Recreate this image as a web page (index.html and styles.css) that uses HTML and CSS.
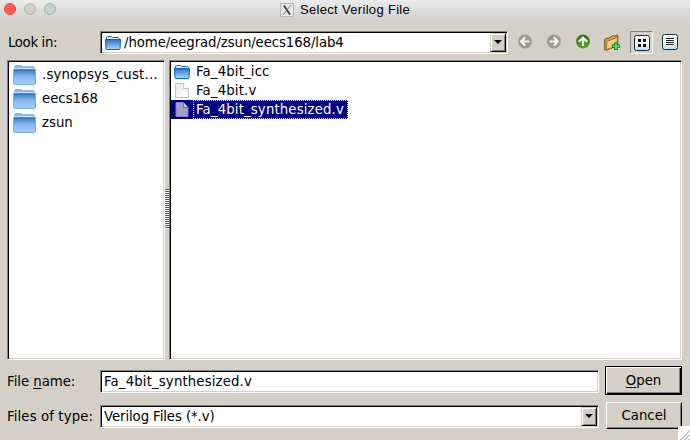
FILE: index.html
```html
<!DOCTYPE html>
<html lang="en">
<head>
<meta charset="utf-8">
<title>Select Verilog File</title>
<link rel="stylesheet" href="styles.css">
</head>
<body>
<svg class="defs" width="0" height="0" aria-hidden="true">
  <defs>
    <linearGradient id="blue" x1="0" y1="0" x2="0" y2="1"><stop offset="0" stop-color="#2d70c4"/><stop offset=".6" stop-color="#79aeea"/><stop offset="1" stop-color="#b5dafd"/></linearGradient>
    <linearGradient id="pale" x1="0" y1="0" x2="0" y2="1"><stop offset="0" stop-color="#3d7bc2"/><stop offset=".5" stop-color="#89b8f2"/><stop offset="1" stop-color="#a5ccfb"/></linearGradient>
    <linearGradient id="tile" x1="0" y1="0" x2="0" y2="1"><stop offset=".5" stop-color="#fff"/><stop offset="1" stop-color="#b5d9fa"/></linearGradient>
    <linearGradient id="green" x1="0" y1="0" x2="0" y2="1"><stop offset="0" stop-color="#2f7714"/><stop offset="1" stop-color="#5aa431"/></linearGradient>
    <linearGradient id="gold" x1="0" y1="0" x2="1" y2="1"><stop offset="0" stop-color="#ffe4a0"/><stop offset="1" stop-color="#e9ad4a"/></linearGradient>
    <linearGradient id="sheet" x1="0" y1="0" x2="1" y2="1"><stop offset="0" stop-color="#e8e8e8"/><stop offset="1" stop-color="#fff"/></linearGradient>
    <symbol id="folder" viewBox="0 0 16 14"><path d="M1.500 3V1.500l1-1h4l1 1h6l1 1V4h-13z" fill="#d9ecff" stroke="#1763b9"/><path d="M.5 3.500h15l-.5 9.500-.5.500h-13L1 13z" fill="url(#blue)" stroke="#0d61bd"/></symbol>
    <symbol id="place" viewBox="0 0 23 20"><path d="M1.500 3V1.500l1-1h6l1 1h11l1 1V4h-20z" fill="#84b6e8" stroke="#8fb8e2"/><path d="M1 3.500h21" stroke="#c9e3ff"/><path d="M.5 4.500h22v14l-1 1h-20l-1-1z" fill="url(#pale)" stroke="#75a8e0"/><path d="M1 5h21" stroke="#2868ae"/></symbol>
    <symbol id="file" viewBox="0 0 14 15"><path d="M.5.5h8l5 5v9H.5z" fill="url(#sheet)" stroke="#c1c1c1"/><path d="M8.500.5v5h5" fill="#fff" stroke="#c1c1c1"/></symbol>
    <symbol id="file-on" viewBox="0 0 14 15"><path d="M1 .5h7.500l4.500 5v9H1z" fill="#a19fc8" stroke="#8583b5"/><path d="M8.500.5v5h4.500" fill="#c2c0df" stroke="#7270aa"/></symbol>
    <symbol id="arrow" viewBox="0 0 14 14"><path d="M7.200 2.800 3.200 7l4 4.200M3.600 7h7.800" fill="none" stroke="#f7f5f1" stroke-width="2.200"/></symbol>
  </defs>
</svg>
<div class="dialog">
  <header class="titlebar">
    <div class="lights"><i class="close"></i><i class="min"></i><i class="max"></i></div>
    <svg class="xlogo" width="14" height="14" viewBox="0 0 14 14"><path d="M.5.5h13v13H.5z" fill="#e7e7e7" stroke="#b4b4b4"/><path d="M3.800 2.500 10 11.500" stroke="#444" stroke-width="2"/><path d="M11 2 3 12" stroke="#666" stroke-width=".8"/></svg>
    <span class="caption">Select Verilog File</span>
  </header>
  <div class="toolbar">
    <label class="look">Look in:</label>
    <div class="field combo path">
      <svg width="16" height="14"><use href="#folder"/></svg>
      <span class="path-text">/home/eegrad/zsun/eecs168/lab4</span>
      <span class="drop"></span>
    </div>
    <div class="tools">
      <svg width="14" height="15" viewBox="0 0 14 14"><circle cx="7" cy="7" r="6.900" fill="#9b9892"/><use href="#arrow" width="14" height="14"/></svg>
      <svg width="14" height="15" viewBox="0 0 14 14"><circle cx="7" cy="7" r="6.900" fill="#9b9892"/><use href="#arrow" width="14" height="14" transform="rotate(180 7 7)"/></svg>
      <svg width="14" height="15" viewBox="0 0 14 14"><circle cx="7" cy="7" r="6.900" fill="url(#green)"/><use href="#arrow" width="14" height="14" transform="rotate(90 7 7)"/></svg>
      <svg class="newdir" width="16" height="17" viewBox="0 0 16 17"><path d="M.6 5.500 3 4l1 .5L9.500 1.500l1 .8L13 .8l.8 1.500v9L3 16H.7z" fill="#d9a04a" stroke="#76521f"/><path d="M3 7.500 14 3 12.500 12 2 16z" fill="url(#gold)" stroke="#8d6124" stroke-width=".8"/><path d="M12 8.500v7.500M8.200 12.200h7.600" stroke="#146d24" stroke-width="3.600"/><path d="M12 9.300v5.900M9 12.200h6" stroke="#4fd768" stroke-width="2"/></svg>
      <span class="pressed"><svg width="16" height="16" viewBox="0 0 16 16"><rect x=".5" y=".5" width="15" height="15" rx="2" fill="url(#tile)" stroke="#182c3e"/><path d="M4 4h3v3H4zM9 4h3v3H9zM4 9h3v3H4zM9 9h3v3H9z" fill="#000"/></svg></span>
      <svg class="detail" width="16" height="16" viewBox="0 0 16 16"><rect x=".5" y=".5" width="15" height="15" rx="2" fill="url(#tile)" stroke="#182c3e"/><path d="M4 4.500h8M4 6.500h8M4 8.500h8M4 10.500h8" stroke="#222"/></svg>
    </div>
  </div>
  <main class="panes">
    <ul class="field places">
      <li><svg width="23" height="20"><use href="#place"/></svg><span class="p1">.synopsys_cust…</span></li>
      <li><svg width="23" height="20"><use href="#place"/></svg><span>eecs168</span></li>
      <li><svg width="23" height="20"><use href="#place"/></svg><span>zsun</span></li>
    </ul>
    <div class="splitter"><i></i></div>
    <ul class="field files">
      <li><svg width="16" height="14"><use href="#folder"/></svg><span>Fa_4bit_icc</span></li>
      <li><svg width="14" height="15"><use href="#file"/></svg><span>Fa_4bit.v</span></li>
      <li class="selected"><svg width="14" height="15"><use href="#file-on"/></svg><span>Fa_4bit_synthesized.v</span></li>
    </ul>
  </main>
  <div class="form">
    <label class="l-name">File <u>n</u>ame:</label>
    <div class="field name"><span>Fa_4bit_synthesized.v</span></div>
    <div class="button default"><span><u>O</u>pen</span></div>
    <label class="l-type">Files of type:</label>
    <div class="field combo type"><span>Verilog Files (*.v)</span><span class="drop"></span></div>
    <div class="button cancel"><span>Cancel</span></div>
  </div>
  <svg class="grip" width="12" height="14" viewBox="0 0 12 14"><path d="M0 0h12v14H0z" fill="#fff"/><path d="M2.500 14 12 4.500M6.500 14l5.500-5.500M10.500 14l1.500-1.500" stroke="#8b8b8b"/></svg>
</div>
</body>
</html>
```
FILE: styles.css
```css
* { box-sizing: border-box; }
body { margin: 0; font: 13.3px/19px "DejaVu Sans", sans-serif; color: #000; }
.defs { position: absolute; }
svg { display: block; flex: none; }
.dialog { position: relative; width: 690px; height: 440px; overflow: hidden; background: #d4d0c8; white-space: nowrap; }
.titlebar { display: flex; align-items: center; height: 20px; background: linear-gradient(#ebebeb, #d1d1d1); }
.lights { display: flex; gap: 8px; width: 280px; padding-left: 4px; margin-top: -2px; }
.lights i { width: 12px; height: 12px; border: 1px solid #e2463f; border-radius: 50%; background: #fd5f58; }
.lights .min { border-color: #c2b59e; background: #d0cfcc; }
.lights .max { border-color: #98b69a; background: #ccd0cc; }
.caption { margin-left: 6px; font: 13px/18px "Liberation Sans", sans-serif; letter-spacing: .32px; }
.toolbar { display: flex; height: 40px; padding: 11px 0 0 8px; }
.look { width: 92px; line-height: 24px; letter-spacing: -.35px; }
.field { border: 1px solid; border-color: #808080 #fff #fff #808080; box-shadow: inset 1px 1px #000, inset -1px -1px #d4d0c8; background: #fff; }
.combo { display: flex; align-items: center; height: 23px; padding: 0 1px 0 4px; }
.path { width: 408px; }
.path-text { margin-left: 3px; letter-spacing: -.09px; }
.drop { display: flex; align-items: center; justify-content: center; width: 16px; height: 19px; margin-left: auto; background: #d4d0c8; border: 1px solid; border-color: #d4d0c8 #000 #000 #d4d0c8; box-shadow: inset 1px 1px #fff, inset -1px -1px #808080; }
.drop::after { content: ""; margin: -1px 1px 0 0; border: 4px solid transparent; border-top-color: #000; border-bottom: 0; }
.tools { display: flex; align-items: flex-start; padding-left: 10px; }
.tools > svg { margin: 3px 15px 0 0; }
.tools > .newdir { margin: 3px 10px 0 -1px; }
.pressed { width: 23px; height: 23px; padding: 3px; border: 1px solid; border-color: #808080 #fff #fff #808080; }
.tools > .detail { margin: 3px 0 0 9px; }
.panes { display: flex; height: 300px; padding-left: 7px; }
ul { margin: 0; padding: 2px; list-style: none; }
li { display: flex; align-items: center; }
.places { width: 158px; padding: 1px 2px; }
.places li { height: 24px; padding-left: 3px; }
.places svg { margin-top: 2px; }
.places span { margin-left: 6px; }
.places .p1 { letter-spacing: .15px; }
.splitter { display: flex; align-items: center; width: 4px; }
.splitter i { width: 4px; height: 40px; margin-top: -2px; background: repeating-linear-gradient(#555 0 1px, #fff 1px 2px); }
.files { width: 513px; padding: 1px; }
.files li { height: 19px; width: 177px; padding-left: 3px; }
.files span { flex: none; margin-left: 3px; padding: 0 2px; line-height: 17px; border: 1px solid transparent; letter-spacing: .14px; }
.files svg[width="14"] { margin: 0 1px; }
.files .selected { background: #000080; color: #fff; }
.files .selected span { width: 155px; height: 19px; border: 1px dotted #ff0; }
.form { display: grid; grid-template-columns: 92px 499px 77px; grid-template-rows: 29px 27px; row-gap: 7px; padding: 6px 0 0 8px; }
.form label { line-height: 31px; margin-left: -1px; }
.form .l-name { letter-spacing: -.05px; }
.form .l-type { line-height: 29px; letter-spacing: .1px; }
.name { height: 23px; margin-top: 4px; padding-left: 3px; line-height: 22px; letter-spacing: .14px; }
.type { margin-top: 3px; padding-left: 3px; }
.type span:first-child { letter-spacing: -.1px; }
.button { display: flex; align-items: center; justify-content: center; width: 76px; height: 27px; margin-left: 7px; border: 1px solid; border-color: #fff #000 #000 #fff; box-shadow: inset -1px -1px #808080; }
.default { width: 77px; height: 29px; margin-left: 6px; border: 1px solid #000; box-shadow: inset 1px 1px #fff, inset -1px -1px #000, inset -2px -2px #808080; }
.grip { position: absolute; right: 0; bottom: 0; }
u { text-underline-offset: 2px; text-decoration-thickness: 1px; }
```
